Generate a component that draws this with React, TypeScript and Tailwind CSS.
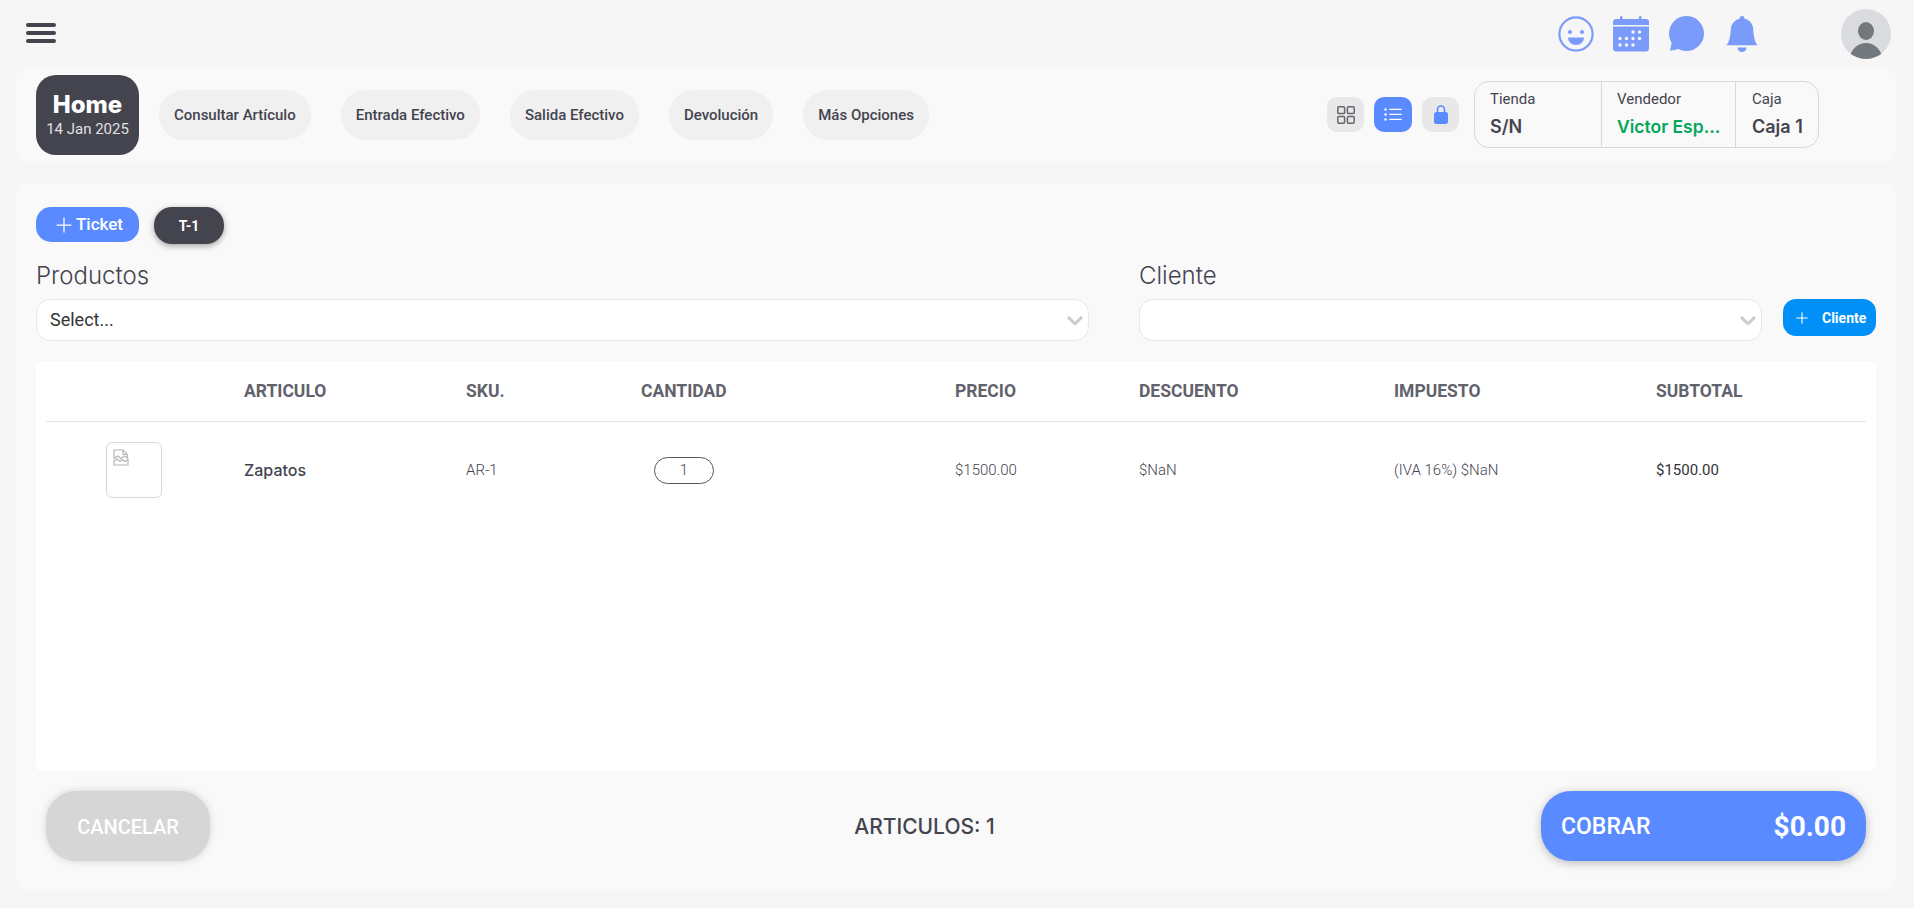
import { BsBellFill, BsListUl } from "react-icons/bs";
import { Plus } from "lucide-react";

const actions = ["Consultar Artículo", "Entrada Efectivo", "Salida Efectivo", "Devolución", "Más Opciones"];
const tableCols = "grid grid-cols-[198px_222px_175px_314px_184px_255px_262px_1fr]";

const Chevron = () => (
  <svg viewBox="0 0 20 20" className="w-[26px] h-[26px] fill-[#cccccc]">
    <path d="M4.516 7.548c.436-.446 1.043-.481 1.576 0L10 11.295l3.908-3.747c.533-.481 1.141-.446 1.574 0 .436.445.408 1.197 0 1.615-.406.418-4.695 4.502-4.695 4.502a1.095 1.095 0 0 1-1.576 0S4.924 9.581 4.516 9.163c-.409-.418-.436-1.17 0-1.615z" />
  </svg>
);

const Smile = () => (
  <svg viewBox="0 0 36 36" className="w-9 h-9">
    <circle cx="18" cy="18" r="16.6" fill="none" stroke="#7b9bfb" strokeWidth="2.2" />
    <circle cx="12" cy="16" r="2" fill="#7b9bfb" />
    <circle cx="24" cy="16" r="2" fill="#7b9bfb" />
    <path d="M10 21.5h16c0 4.500-3.500 7.500-8 7.500s-8-3-8-7.500z" fill="#7b9bfb" />
  </svg>
);

const Calendar = () => (
  <svg viewBox="0 0 36 36" className="w-9 h-9" fill="#7b9bfb">
    <rect x="7" y="0" width="2.400" height="5" rx="1" />
    <rect x="26" y="0" width="2.400" height="5" rx="1" />
    <path d="M3 3h30a3 3 0 0 1 3 3v3H0V6a3 3 0 0 1 3-3z" />
    <path d="M0 10.500h36V32a3.500 3.500 0 0 1-3.500 3.500h-29A3.500 3.500 0 0 1 0 32z" />
    <g fill="#f6f6f6">
      <circle cx="20" cy="16" r="1.700" />
      <circle cx="26.500" cy="16" r="1.700" />
      <circle cx="7" cy="22.500" r="1.700" />
      <circle cx="13.500" cy="22.500" r="1.700" />
      <circle cx="20" cy="22.500" r="1.700" />
      <circle cx="26.500" cy="22.500" r="1.700" />
      <circle cx="7" cy="29" r="1.700" />
      <circle cx="13.500" cy="29" r="1.700" />
      <circle cx="20" cy="29" r="1.700" />
    </g>
  </svg>
);

const Chat = () => (
  <svg viewBox="0 0 36 36" className="w-9 h-9" fill="#7b9bfb">
    <circle cx="18.500" cy="17.500" r="17.500" />
    <path d="M4.500 23 2 34.500c3.500 0 8.500-1 12-3.500z" />
  </svg>
);

const GridIcon = () => (
  <svg viewBox="0 0 18 18" className="w-[18px] h-[18px]" fill="none" stroke="#66666f" strokeWidth="1.5">
    <rect x="0.800" y="0.800" width="6.800" height="6.800" rx="1.200" />
    <rect x="10.400" y="0.800" width="6.800" height="6.800" rx="1.200" />
    <rect x="0.800" y="10.400" width="6.800" height="6.800" rx="1.200" />
    <rect x="10.400" y="10.400" width="6.800" height="6.800" rx="1.200" />
  </svg>
);

const Lock = () => (
  <svg viewBox="0 0 14 19" className="w-[14px] h-[19px]">
    <path d="M3.500 8V4.500a3.500 3.500 0 0 1 7 0V8" fill="none" stroke="#5a8aff" strokeWidth="1.6" />
    <rect x="0" y="7" width="14" height="12" rx="2.500" fill="#5a8aff" />
  </svg>
);

const Avatar = () => (
  <svg viewBox="0 0 50 50" className="w-[50px] h-[50px] rounded-full">
    <rect width="50" height="50" fill="#d9dbde" />
    <ellipse cx="25" cy="22" rx="8" ry="9" fill="#73787c" />
    <ellipse cx="25" cy="50" rx="16" ry="16" fill="#73787c" />
  </svg>
);

const BrokenImage = () => (
  <svg viewBox="0 0 16 17" className="w-4 h-[17px]" fill="none" stroke="#b5b5b5" strokeWidth="1.2">
    <path d="M1 8.500V1h9l4.500 4.500v3.500l-3-2L8 9.500 5 7l-4 2.500z" />
    <path d="M10 1v4.500h4.500" />
    <path d="M1 12l3-2 3 2.500 2.500-2 2.500 2 3-2V16H1z" />
  </svg>
);

export default function App() {
  return (
    <div className="h-[908px] bg-[#f6f6f6] font-['Roboto',sans-serif] text-[#44444f] overflow-hidden">
      <header className="h-[67px] flex items-center pl-[26px] pr-[23px]">
        <div className="flex flex-col gap-1 w-[30px] mb-[2px]">
          <span className="h-1 rounded-full bg-[#44444f]" />
          <span className="h-1 rounded-full bg-[#44444f]" />
          <span className="h-1 rounded-full bg-[#44444f]" />
        </div>
        <div className="ml-auto flex items-center">
          <Smile />
          <div className="ml-[19px]">
            <Calendar />
          </div>
          <div className="ml-[19px]">
            <Chat />
          </div>
          <BsBellFill className="ml-5 text-[#7b9bfb] text-[36px]" />
          <div className="ml-[81px]">
            <Avatar />
          </div>
        </div>
      </header>

      <section className="ml-4 mr-[18px] h-[95px] rounded-xl bg-[#f9f9f9] flex items-center pl-5 pr-[77px]">
        <div className="w-[103px] h-20 rounded-[20px] bg-[#44444f] flex flex-col items-center justify-center text-white">
          <span className="font-['Inter',sans-serif] font-extrabold text-[24px] leading-[28px]">Home</span>
          <span className="text-[15px] leading-5 text-[#e0e0e0]">14 Jan 2025</span>
        </div>
        <nav className="ml-5 flex gap-[30px]">
          {actions.map((a) => (
            <button key={a} className="h-[50px] px-[15px] pt-[1px] rounded-[25px] bg-[#f0f0f0] text-[15px] font-medium">
              {a}
            </button>
          ))}
        </nav>
        <div className="ml-auto flex items-center gap-[10px]">
          <button className="w-[37px] h-[35px] rounded-[10px] bg-[#e8e8e8] flex items-center justify-center">
            <GridIcon />
          </button>
          <button className="w-[38px] h-[35px] rounded-[10px] bg-[#5a8aff] flex items-center justify-center">
            <BsListUl className="text-white text-[20px]" />
          </button>
          <button className="w-[37px] h-[35px] rounded-[10px] bg-[#e8e8e8] flex items-center justify-center">
            <Lock />
          </button>
          <div className="ml-[5px] w-[345px] h-[67px] rounded-[15px] border border-[#d8d8d8] flex">
            <div className="w-[126px] pl-[15px] pt-[7px]">
              <p className="text-[15px] leading-5">Tienda</p>
              <p className="mt-[6px] font-['Inter',sans-serif] font-semibold text-lg leading-6">S/N</p>
            </div>
            <div className="w-[135px] border-x border-[#d8d8d8] pl-[15px] pt-[7px]">
              <p className="text-[15px] leading-5">Vendedor</p>
              <p className="mt-[6px] font-['Inter',sans-serif] font-semibold text-[17.5px] leading-6 text-[#05a65b] whitespace-nowrap">Victor Esp...</p>
            </div>
            <div className="flex-1 pl-4 pt-[7px]">
              <p className="text-[15px] leading-5">Caja</p>
              <p className="mt-[6px] font-['Inter',sans-serif] font-semibold text-lg leading-6 whitespace-nowrap">Caja 1</p>
            </div>
          </div>
        </div>
      </section>

      <main className="ml-4 mr-[18px] mt-[21px] h-[707px] rounded-xl bg-[#f9f9f9] pt-6 pl-5 pr-5">
        <div className="flex items-start gap-[15px]">
          <button className="w-[103px] h-[35px] rounded-[15px] bg-[#5a8aff] text-white flex items-center justify-center text-[17px] font-medium">
            <Plus size={24} strokeWidth={1.25} />
            Ticket
          </button>
          <button className="w-[70px] h-[37px] rounded-[18px] bg-[#44444f] text-white text-sm font-bold shadow-[0_2px_6px_rgba(0,0,0,0.35)]">T-1</button>
        </div>

        <div className="mt-[17px] grid grid-cols-[1053px_1fr] gap-x-[50px]">
          <div>
            <label className="block h-[38px] font-['Inter',sans-serif] font-light text-[24px] leading-[30px]">Productos</label>
            <div className="h-[42px] rounded-[14px] border border-[#e6e8f0] bg-white flex items-center justify-between pl-[13px] text-[#333]">
              <span className="text-lg">Select...</span>
              <Chevron />
            </div>
          </div>
          <div>
            <label className="block h-[38px] font-['Inter',sans-serif] font-light text-[24px] leading-[30px]">Cliente</label>
            <div className="flex items-start gap-[21px]">
              <div className="flex-1 h-[42px] rounded-[14px] border border-[#e6e8f0] bg-white flex items-center justify-end">
                <Chevron />
              </div>
              <button className="w-[93px] h-[37px] rounded-[13px] bg-[#0090f7] text-white text-sm font-bold flex items-center pl-[10px] gap-[11px] whitespace-nowrap">
                <Plus size={18} strokeWidth={1.5} />
                Cliente
              </button>
            </div>
          </div>
        </div>

        <div className="mt-5 h-[410px] rounded-md bg-white px-[10px]">
          <div className={`${tableCols} h-[61px] items-center border-b border-[#e3e4e8] font-bold text-[17.5px] text-[#62626c]`}>
            <span />
            <span>ARTICULO</span>
            <span>SKU.</span>
            <span>CANTIDAD</span>
            <span>PRECIO</span>
            <span>DESCUENTO</span>
            <span>IMPUESTO</span>
            <span>SUBTOTAL</span>
          </div>
          <div className={`${tableCols} h-[96px] items-center text-[15px] font-light`}>
            <div className="ml-[60px] w-14 h-14 rounded-md border border-[#d8d8d8] pl-[6px] pt-[6px]">
              <BrokenImage />
            </div>
            <span className="font-['Inter',sans-serif] font-medium text-base text-[#44444f]">Zapatos</span>
            <span>AR-1</span>
            <div className="ml-[13px] w-[60px] h-[27px] rounded-full border border-[#55555f] flex items-center justify-center">1</div>
            <span>$1500.00</span>
            <span>$NaN</span>
            <span>(IVA 16%) $NaN</span>
            <span className="font-normal text-[#33333c]">$1500.00</span>
          </div>
        </div>

        <div className="mt-5 flex items-center pl-[10px] pr-[10px]">
          <button className="w-[164px] h-[70px] pt-[2px] rounded-[30px] bg-[#d6d6d6] text-white text-xl font-medium shadow-[0_0_8px_rgba(0,0,0,0.15)]">CANCELAR</button>
          <span className="flex-1 pl-[98px] pt-[2px] text-center font-['Inter',sans-serif] font-medium text-[21px]">ARTICULOS: 1</span>
          <button className="w-[325px] h-[70px] pt-[2px] rounded-[30px] bg-[#5a8aff] text-white flex items-center justify-between px-5 shadow-[0_2px_10px_rgba(0,0,0,0.25)]">
            <span className="text-[23px] font-medium">COBRAR</span>
            <span className="text-[28px] font-bold">$0.00</span>
          </button>
        </div>
      </main>
    </div>
  );
}
